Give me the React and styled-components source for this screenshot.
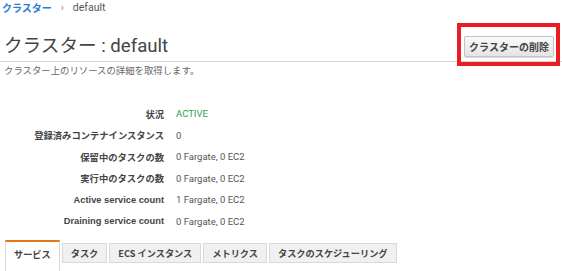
import React from "react";
import styled, { createGlobalStyle } from "styled-components";

const Global = createGlobalStyle`
  html, body { margin: 0; padding: 0; background: #fff; }
  body { font-family: Roboto, "Noto Sans CJK JP", sans-serif; color: #444; overflow: hidden; }
`;

const Page = styled.div`
  width: 562px;
  height: 271px;
  display: flex;
  flex-direction: column;
`;

const Crumbs = styled.div`
  display: flex;
  align-items: center;
  height: 16px;
  padding-left: 2px;
  font-size: 10px;
  gap: 9px;
`;

const CrumbLink = styled.a`
  color: #2a7cd1;
  font-weight: bold;
  font-family: "Noto Sans CJK JP", sans-serif;
  text-decoration: none;
`;

const CrumbSep = styled.span`
  color: #888;
  font-size: 10px;
`;

const CrumbCurrent = styled.span`
  color: #555;
  font-family: Roboto, sans-serif;
  font-size: 10.5px;
`;

const Header = styled.div`
  margin-top: 19px;
  display: flex;
  align-items: flex-start;
  justify-content: space-between;
  border-bottom: 1px solid #d6d6d6;
  padding: 0 8px 3px 4px;
`;

const Title = styled.h1`
  margin: 0;
  font-weight: normal;
  font-size: 18.6px;
  line-height: 24px;
  color: #444;
  font-family: Roboto, "Noto Sans CJK JP", sans-serif;
`;

const ButtonWrap = styled.div`
  position: relative;
  margin-top: 2px;
`;

const Highlight = styled.div`
  position: absolute;
  left: -7px;
  right: -6px;
  top: -13px;
  bottom: -9px;
  border: 4px solid #ea1c24;
  pointer-events: none;
`;

const Button = styled.button`
  height: 21px;
  width: 90px;
  padding: 0;
  font-family: "Noto Sans CJK JP", sans-serif;
  font-size: 10px;
  font-weight: bold;
  color: #444;
  background: linear-gradient(#fafafa, #e4e4e4);
  border: 1px solid #c4c4c4;
  border-radius: 2px;
  box-shadow: 0 1px 1px rgba(0,0,0,0.15);
`;

const Subtitle = styled.div`
  padding-left: 4px;
  margin-top: 2px;
  font-size: 9.4px;
  line-height: 12px;
  color: #666;
  font-family: "Noto Sans CJK JP", sans-serif;
`;

const Details = styled.dl`
  margin: 27px 0 0;
  display: grid;
  grid-template-columns: 164px 1fr;
  column-gap: 12px;
  grid-auto-rows: 21.5px;
  align-items: center;
`;

const Label = styled.dt`
  text-align: right;
  font-weight: bold;
  font-size: 9.3px;
  color: #444;
  font-family: "Liberation Sans", "Noto Sans CJK JP", sans-serif;
  white-space: nowrap;
`;

const Value = styled.dd`
  margin: 0;
  font-size: 9.5px;
  color: ${(p) => (p.$status ? "#2ca24a" : "#555")};
  font-family: Roboto, sans-serif;
`;

const Tabs = styled.div`
  margin-top: 8px;
  padding-left: 5px;
  display: flex;
  align-items: flex-start;
  gap: 2px;
`;

const Tab = styled.div`
  box-sizing: border-box;
  font-family: "Noto Sans CJK JP", "Liberation Sans", sans-serif;
  font-size: 9.2px;
  font-weight: bold;
  color: #444;
  white-space: nowrap;
  text-align: center;
  border: 1px solid #d9d9d9;
  ${(p) =>
    p.$active
      ? `
    background: #fff;
    border-top: 2px solid #e47911;
    border-bottom: none;
    height: 32px;
    padding: 5px 8px 0;
    line-height: 14px;
  `
      : `
    margin-top: 3px;
    background: #f0f0f0;
    height: 20px;
    padding: 2px 8px 0;
    line-height: 14px;
  `}
`;

const rows = [
  ["状況", "ACTIVE", true],
  ["登録済みコンテナインスタンス", "0"],
  ["保留中のタスクの数", "0 Fargate, 0 EC2"],
  ["実行中のタスクの数", "0 Fargate, 0 EC2"],
  ["Active service count", "1 Fargate, 0 EC2"],
  ["Draining service count", "0 Fargate, 0 EC2"],
];

const tabs = ["サービス", "タスク", "ECS インスタンス", "メトリクス", "タスクのスケジューリング"];

export default function App() {
  return (
    <Page>
      <Global />
      <Crumbs>
        <CrumbLink href="#">クラスター</CrumbLink>
        <CrumbSep>›</CrumbSep>
        <CrumbCurrent>default</CrumbCurrent>
      </Crumbs>
      <Header>
        <Title>クラスター : default</Title>
        <ButtonWrap>
          <Button>クラスターの削除</Button>
          <Highlight />
        </ButtonWrap>
      </Header>
      <Subtitle>クラスター上のリソースの詳細を取得します。</Subtitle>
      <Details>
        {rows.map(([k, v, s]) => (
          <React.Fragment key={k}>
            <Label>{k}</Label>
            <Value $status={s}>{v}</Value>
          </React.Fragment>
        ))}
      </Details>
      <Tabs>
        {tabs.map((t, i) => (
          <Tab key={t} $active={i === 0}>{t}</Tab>
        ))}
      </Tabs>
    </Page>
  );
}
